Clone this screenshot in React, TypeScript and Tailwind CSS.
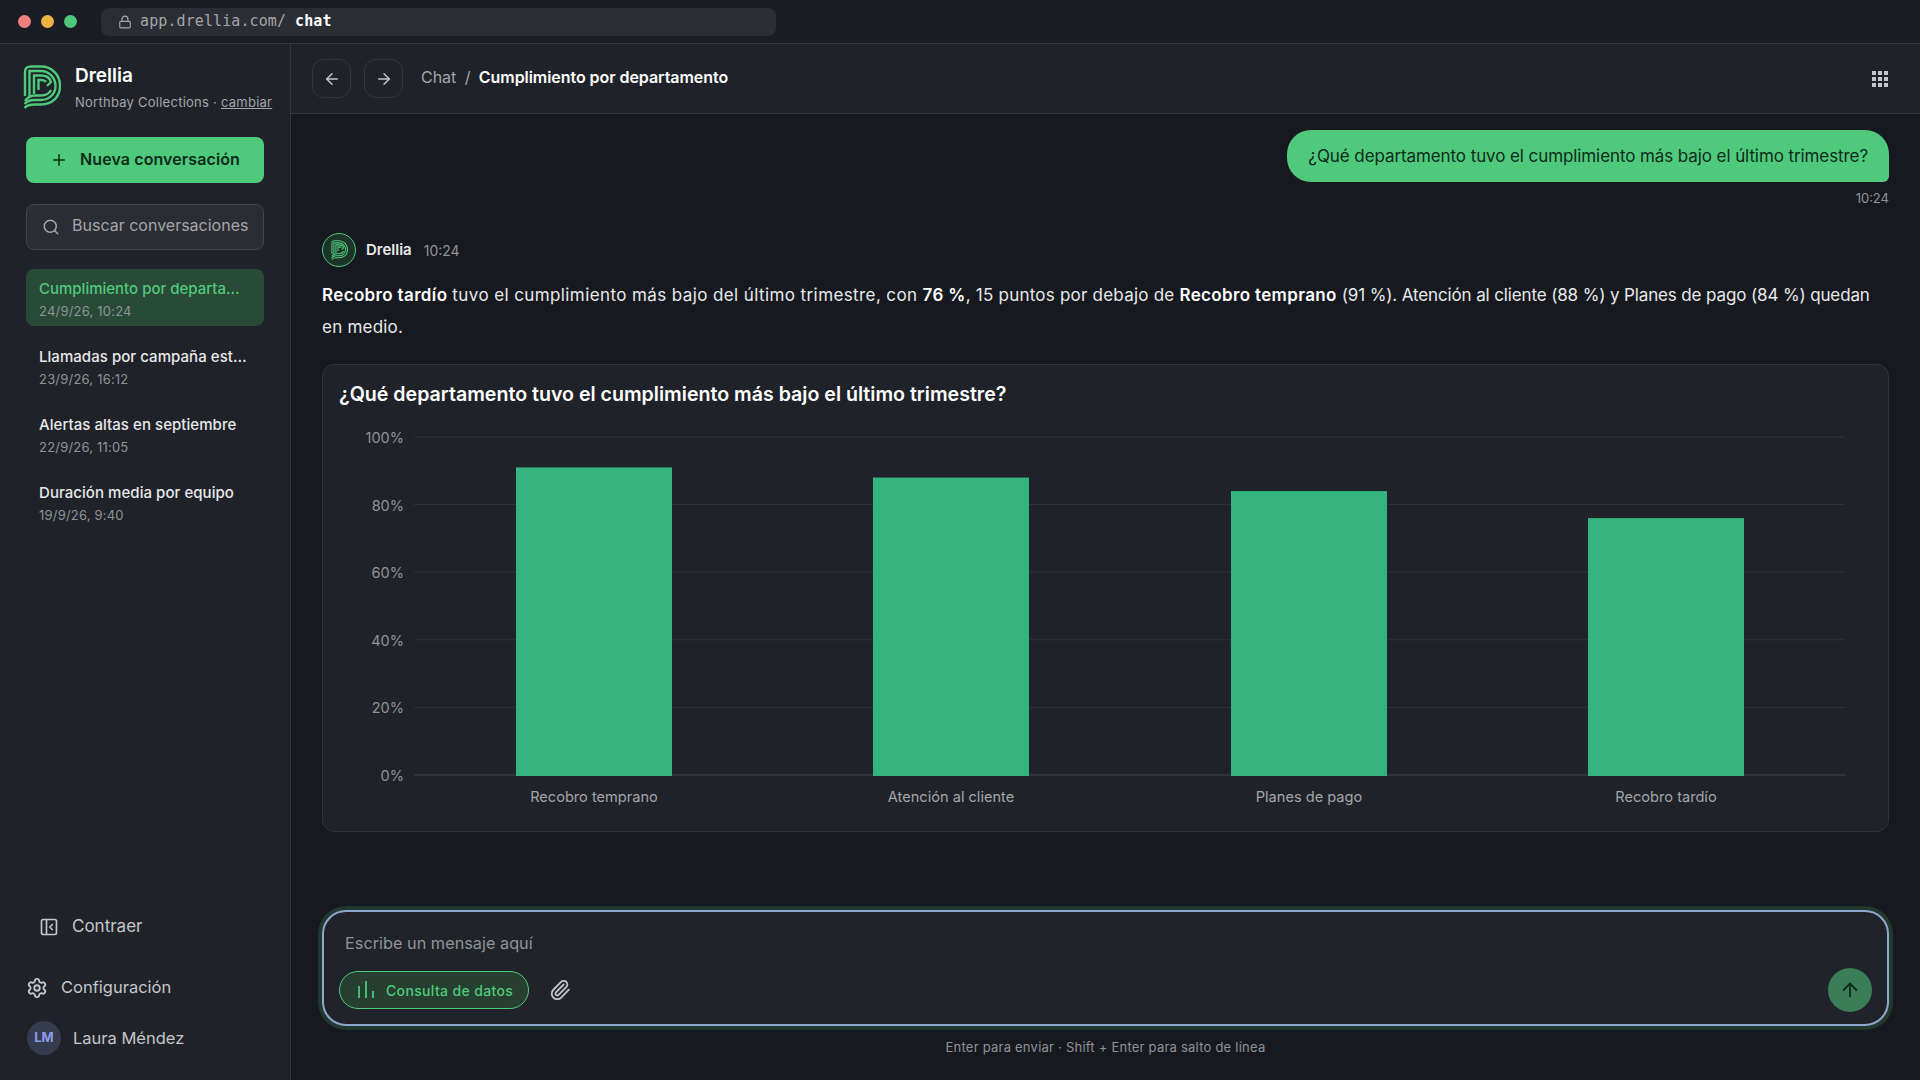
import { ArrowLeft, ArrowRight, ArrowUp, Lock, PanelLeftClose, Paperclip, Plus, Search, Settings } from 'lucide-react'

const CONVERSATIONS = [
  { title: 'Cumplimiento por departamento', date: '24/9/26, 10:24', active: true },
  { title: 'Llamadas por campaña estacional', date: '23/9/26, 16:12', active: false },
  { title: 'Alertas altas en septiembre', date: '22/9/26, 11:05', active: false },
  { title: 'Duración media por equipo', date: '19/9/26, 9:40', active: false }
]

const BARS = [
  { label: 'Recobro temprano', value: 91, x: 516 },
  { label: 'Atención al cliente', value: 88, x: 873 },
  { label: 'Planes de pago', value: 84, x: 1231 },
  { label: 'Recobro tardío', value: 76, x: 1588 }
]

const TICKS = [100, 80, 60, 40, 20, 0]

function Logo({ width, height }: { width: number; height: number }) {
  return (
    <svg width={width} height={height} viewBox="0 0 38 44" fill="none" stroke="#4fc97c" strokeWidth="2.4" className="shrink-0">
      <path d="M2 31V7Q2 1.5 8 1.5H18C29 1.5 37 10 37 21C37 32 29 39.5 18 39.5H12C7 39.5 3 41 1.5 43" />
      <path d="M6.5 33V6H18C26 6 32.5 12.5 32.5 21C32.5 29 26 35 18 35H12C7 35 3 37 1.5 39" />
      <path d="M11 29V10.5H18C23 10.5 27 13 28 17L24 21" />
      <path d="M28 25C26 29 22 30.5 18 30.5H12C8 30.5 4 33 2 36" />
      <path d="M15.5 25V15H18C20 15 22 15.5 23 17" />
    </svg>
  )
}

function GridIcon() {
  return (
    <svg width="16" height="16" viewBox="0 0 16 16" fill="#c4c6c9" className="ml-auto">
      {[0, 6, 12].map((row) =>
        [0, 6, 12].map((col) => <rect key={`${row}-${col}`} x={col} y={row} width="4" height="4" />)
      )}
    </svg>
  )
}

function Chart() {
  const y = (value: number) => 775 - (value / 100) * 338
  return (
    <svg width="1564" height="390" viewBox="323 430 1564 390" className="mt-[22px] block">
      {TICKS.map((tick) => (
        <g key={tick}>
          <line x1="414" x2="1845" y1={y(tick)} y2={y(tick)} stroke={tick === 0 ? '#3f444b' : '#2f343a'} strokeWidth="1" />
          <text x="404" y={y(tick) + 6} textAnchor="end" fill="#8f9398" fontSize="14.5" fontFamily="Inter, sans-serif">
            {tick}%
          </text>
        </g>
      ))}
      {BARS.map((bar) => (
        <g key={bar.label}>
          <rect x={bar.x} y={y(bar.value)} width="156" height={776 - y(bar.value)} fill="#34b580" />
          <text x={bar.x + 78} y="802" textAnchor="middle" fill="#a3a6aa" fontSize="14.6" fontFamily="Inter, sans-serif">
            {bar.label}
          </text>
        </g>
      ))}
    </svg>
  )
}

export default function App() {
  return (
    <div className="flex h-[1080px] w-[1920px] flex-col overflow-hidden bg-[#161a20] font-['Inter',sans-serif] text-[#e8e9ea]">
      <div className="flex h-[44px] shrink-0 items-center border-b border-[#33373d] bg-[#1a1e24]">
        <div className="ml-[18px] flex items-center gap-[10px]">
          <span className="h-[13px] w-[13px] rounded-full bg-[#f2817b]" />
          <span className="h-[13px] w-[13px] rounded-full bg-[#efb344]" />
          <span className="h-[13px] w-[13px] rounded-full bg-[#4fc97c]" />
        </div>
        <div className="ml-[24px] flex h-[28px] w-[675px] items-center rounded-lg bg-[#2a2e34] pl-[17px] font-['DejaVu_Sans_Mono',monospace] text-[15px] tracking-[0.1px]">
          <Lock size={14} className="text-[#a3a6aa]" />
          <span className="ml-[8px] text-[#a3a6aa]">app.drellia.com/</span>
          <span className="ml-[9px] font-bold text-white">chat</span>
        </div>
      </div>
      <div className="flex min-h-0 flex-1">
        <aside className="flex w-[291px] shrink-0 flex-col border-r border-[#33373d] bg-[#1f2329] px-[26px]">
          <div className="-ml-[3px] mt-[21px] flex items-start gap-[14px]">
            <Logo width={38} height={44} />
            <div>
              <div className="text-[19px] leading-[22px] font-semibold text-white">Drellia</div>
              <div className="mt-[6px] text-[13px] leading-[18px] tracking-[0.25px] whitespace-nowrap text-[#a3a6aa]">
                Northbay Collections · <span className="underline">cambiar</span>
              </div>
            </div>
          </div>
          <button className="mt-[26px] flex h-[46px] w-[238px] items-center justify-center gap-[12px] rounded-lg bg-[#4fc97c] text-[16px] font-semibold tracking-[0.1px] text-[#0d2b1a]">
            <Plus size={18} />
            <span className="-mt-[2px]">Nueva conversación</span>
          </button>
          <div className="mt-[21px] flex h-[46px] w-[238px] items-center rounded-lg border border-[#41454b] bg-[#2a2e34] pl-[15px] text-[16px] text-[#a3a6aa]">
            <Search size={18} />
            <span className="ml-[12px] -mt-[4px]">Buscar conversaciones</span>
          </div>
          <div className="mt-[19px] flex w-[238px] flex-col gap-[11px]">
            {CONVERSATIONS.map((item) => (
              <div key={item.title} className={item.active ? 'h-[57px] rounded-lg bg-[#2a4a38] px-[13px] pt-[10px]' : 'h-[57px] px-[13px] pt-[10px]'}>
                <div className={item.active ? 'truncate text-[15px] leading-[20px] font-medium text-[#4fc97c]' : 'truncate text-[15px] leading-[20px] font-medium tracking-[0.05px] text-[#e8e9ea]'}>
                  {item.title}
                </div>
                <div className="mt-[3px] text-[13px] leading-[18px] tracking-[0.2px] text-[#8f9398]">{item.date}</div>
              </div>
            ))}
          </div>
          <div className="mt-auto flex items-center pb-[36px] pl-[13px] text-[17px] text-[#c4c6c9]">
            <PanelLeftClose size={20} />
            <span className="ml-[13px]">Contraer</span>
          </div>
          <div className="flex items-center pb-[21px] text-[16.5px] text-[#c4c6c9]">
            <Settings size={22} />
            <span className="ml-[13px]">Configuración</span>
          </div>
          <div className="ml-[1px] flex items-center pb-[25px] text-[16.5px] text-[#c4c6c9]">
            <span className="flex h-[34px] w-[34px] items-center justify-center rounded-full bg-[#353c4f] text-[13px] font-bold text-[#8f9be8]">LM</span>
            <span className="ml-[12px]">Laura Méndez</span>
          </div>
        </aside>
        <main className="flex min-w-0 flex-1 flex-col">
          <div className="flex h-[70px] shrink-0 items-center border-b border-[#33373d] bg-[#1f2329] pr-[32px] pl-[21px]">
            <button className="flex h-[39px] w-[39px] items-center justify-center rounded-xl border border-[#33373d] text-[#c4c6c9]">
              <ArrowLeft size={18} />
            </button>
            <button className="ml-[13px] flex h-[39px] w-[39px] items-center justify-center rounded-xl border border-[#33373d] text-[#c4c6c9]">
              <ArrowRight size={18} />
            </button>
            <div className="-mt-[4px] ml-[18px] text-[16px] tracking-[-0.05px] text-[#a3a6aa]">
              Chat <span className="mx-[4px]">/</span> <span className="font-semibold text-white">Cumplimiento por departamento</span>
            </div>
            <GridIcon />
          </div>
          <div className="flex min-h-0 flex-1 flex-col px-[31px] pt-[16px]">
            <div className="flex flex-col items-end">
              <div className="rounded-[24px] rounded-br-[6px] bg-[#4fc97c] px-[21px] py-[14px] text-[17px] leading-[24px] tracking-[-0.09px] text-[#0d2b1a]">
                ¿Qué departamento tuvo el cumplimiento más bajo el último trimestre?
              </div>
              <div className="mt-[7px] text-[13px] leading-[18px] text-[#8f9398]">10:24</div>
            </div>
            <div className="mt-[26px] flex items-center">
              <span className="flex h-[34px] w-[34px] items-center justify-center rounded-full border border-[#4fc97c] bg-[#1d3428]">
                <Logo width={17} height={20} />
              </span>
              <span className="ml-[10px] text-[15px] font-semibold">Drellia</span>
              <span className="ml-[12px] text-[14px] text-[#8f9398]">10:24</span>
            </div>
            <p className="mt-[12px] text-[17px] leading-[32px] tracking-[0.22px]">
              <strong className="font-semibold tracking-[0.35px] text-white">Recobro tardío</strong>{' '}
              <span className="tracking-[0.4px]">tuvo el cumplimiento más bajo del último trimestre, con</span>{' '}
              <strong className="font-semibold tracking-[0.35px] text-white">76 %</strong>, 15 puntos por debajo de{' '}
              <strong className="font-semibold tracking-[0.35px] text-white">Recobro temprano</strong>{' '}
              <span className="tracking-[-0.13px]">(91 %). Atención al cliente (88 %) y Planes de pago (84 %) quedan</span> en medio.
            </p>
            <div className="mt-[21px] h-[468px] rounded-xl border border-[#2f343a] bg-[#1f2329]">
              <div className="mt-[15px] pl-[16px] text-[19.6px] leading-[28px] font-semibold text-white">
                ¿Qué departamento tuvo el cumplimiento más bajo el último trimestre?
              </div>
              <Chart />
            </div>
            <div className="mt-[78px] flex h-[116px] flex-col rounded-[24px] border-2 border-[#8fa6cf] bg-[#20242a] pr-[15px] pb-[12px] pl-[15px] shadow-[0_0_0_4px_#21392f]">
              <div className="mt-[19px] pl-[6px] text-[16.3px] leading-[24px] text-[#8f9398]">Escribe un mensaje aquí</div>
              <div className="mt-auto flex items-center">
                <span className="flex h-[38px] w-[190px] items-center gap-[10px] rounded-full border border-[#4fc97c] bg-[#263f30] pl-[16px] text-[14px] font-medium tracking-[0.35px] text-[#4fc97c]">
                  <svg width="20" height="20" viewBox="0 0 20 20" stroke="currentColor" strokeWidth="1.8">
                    <line x1="3" x2="3" y1="6" y2="18" />
                    <line x1="10" x2="10" y1="1" y2="18" />
                    <line x1="17" x2="17" y1="11" y2="18" />
                  </svg>
                  Consulta de datos
                </span>
                <Paperclip size={22} className="ml-[20px] text-[#c4c6c9]" />
                <button className="ml-auto flex h-[44px] w-[44px] items-center justify-center rounded-full bg-[#3a7d56] text-[#0d2b1a]">
                  <ArrowUp size={22} />
                </button>
              </div>
            </div>
            <div className="mt-[12px] text-center text-[13px] leading-[18px] tracking-[0.23px] text-[#8f9398]">Enter para enviar · Shift + Enter para salto de línea</div>
          </div>
        </main>
      </div>
    </div>
  )
}
